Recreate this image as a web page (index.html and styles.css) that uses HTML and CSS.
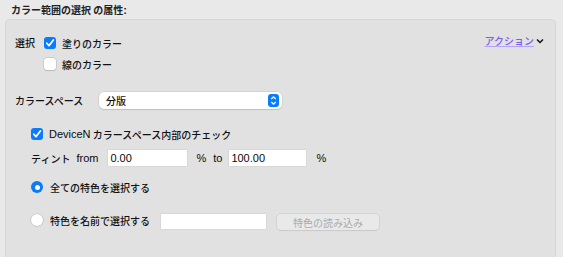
FILE: index.html
```html
<!DOCTYPE html>
<html lang="ja">
<head>
    <meta charset="UTF-8">
    <title>カラー範囲の選択</title>
    <link rel="stylesheet" href="styles.css">
</head>
<body>
    <div class="title">カラー範囲の選択 の属性<span class="lat">:</span></div>

    <div class="group">
        <!-- 選択 -->
        <div class="row-select">
            <span class="label-select">選択</span>
            <div class="checks">
                <label class="item">
                    <span class="check on">
                        <svg width="12" height="12" viewBox="0 0 12 12"><path d="M2.8 6.2 L5 8.6 L9.4 3" fill="none" stroke="#fff" stroke-width="1.7" stroke-linecap="round" stroke-linejoin="round"/></svg>
                    </span>
                    塗りのカラー
                </label>
                <label class="item">
                    <span class="check"></span>
                    線のカラー
                </label>
            </div>
            <a class="action" href="#">アクション</a>
            <svg class="chev" width="8" height="6" viewBox="0 0 8 6"><path d="M1 1.5 L4 4.5 L7 1.5" fill="none" stroke="#111" stroke-width="1.5"/></svg>
        </div>

        <!-- カラースペース -->
        <div class="row-space">
            <span class="label-space">カラースペース</span>
            <div class="select">
                <span>分版</span>
                <span class="stepper">
                    <svg width="7" height="11" viewBox="0 0 7 11"><path d="M1.3 4 L3.5 1.8 L5.7 4 M1.3 7 L3.5 9.2 L5.7 7" fill="none" stroke="#fff" stroke-width="1.3"/></svg>
                </span>
            </div>
        </div>

        <div class="indent">
            <label class="item row-device">
                <span class="check on">
                    <svg width="12" height="12" viewBox="0 0 12 12"><path d="M2.8 6.2 L5 8.6 L9.4 3" fill="none" stroke="#fff" stroke-width="1.7" stroke-linecap="round" stroke-linejoin="round"/></svg>
                </span>
                <span class="lat">DeviceN</span>&nbsp;カラースペース内部のチェック
            </label>

            <div class="row-tint">
                <span>ティント</span>
                <span class="lat from">from</span>
                <input class="field f-from" type="text" value="0.00">
                <span class="lat pct">%</span>
                <span class="lat to">to</span>
                <input class="field f-to" type="text" value="100.00">
                <span class="lat pct2">%</span>
            </div>

            <label class="item row-radio1">
                <span class="radio on"><span class="dot"></span></span>
                全ての特色を選択する
            </label>

            <div class="row-radio2">
                <label class="item radio2-label">
                    <span class="radio"></span>
                    特色を名前で選択する
                </label>
                <input class="field f-name" type="text" value="">
                <button class="btn" disabled>特色の読み込み</button>
            </div>
        </div>
    </div>
</body>
</html>
```

FILE: styles.css
```css
body {
    margin: 0;
    background: #e9e9e9;
    font-family: "Noto Sans CJK JP", sans-serif;
    font-size: 10px;
    font-weight: 500;
    color: #111;
    height: 257px;
    overflow: hidden;
}

.lat {
    font-family: "Liberation Sans", "Noto Sans CJK JP", sans-serif;
    font-size: 11px;
    font-weight: normal;
    color: #0a0a0a;
}

.title {
    padding: 3px 0 0 11px;
    height: 16px;
    line-height: 14px;
    font-weight: bold;
    color: #222;
}

.title .lat {
    font-weight: bold;
    color: #222;
}

/* グループボックス */
.group {
    margin: 0 7px 0 5px;
    height: 238px;
    background: #e1e1e1;
    border: 1px solid #d6d6d6;
    border-bottom: none;
    border-radius: 5px 5px 0 0;
    padding: 16px 0 0 9px;
    box-sizing: border-box;
}

.item {
    display: flex;
    align-items: center;
    height: 14px;
}

.check {
    width: 12px;
    height: 12px;
    border-radius: 3px;
    background: #fff;
    box-shadow: 0 0 0 0.5px #b9b9b9, 0 0.5px 1px rgba(0, 0, 0, 0.15);
    margin-right: 6px;
    display: flex;
}

.check.on {
    background: #0b7bfe;
    box-shadow: none;
}

.row-select {
    display: flex;
    align-items: flex-start;
    height: 55px;
}

.label-select {
    width: 29px;
    line-height: 14px;
}

.checks {
    display: flex;
    flex-direction: column;
    gap: 7px;
}

.action {
    margin-left: auto;
    margin-top: -2px;
    color: #7b5cf2;
    text-decoration-color: #b3a2f5;
    line-height: 14px;
}

.chev {
    margin: 2px 11px 0 2px;
}

.row-space {
    display: flex;
    align-items: center;
    height: 18px;
}

.label-space {
    width: 84px;
}

.select {
    width: 183px;
    height: 17px;
    background: #fff;
    border-radius: 5px;
    box-shadow: 0 0 0 0.5px #c4c4c4, 0 1px 1px rgba(0, 0, 0, 0.15);
    display: flex;
    align-items: center;
    justify-content: space-between;
    padding: 0 3px 0 7px;
    box-sizing: border-box;
}

.stepper {
    width: 11px;
    height: 13px;
    border-radius: 3px;
    background: #0b7bfe;
    display: flex;
    align-items: center;
    justify-content: center;
}

.indent {
    padding-left: 16px;
}

.row-device {
    margin-top: 18px;
}

.row-tint {
    display: flex;
    align-items: center;
    height: 18px;
    margin-top: 8px;
}

.from {
    margin-left: 6px;
}

.field {
    height: 16px;
    border: none;
    background: #fff;
    box-shadow: 0 0 0 0.5px #cfcfcf;
    font-family: "Liberation Sans", sans-serif;
    font-size: 11px;
    color: #0a0a0a;
    padding: 0 2px;
    box-sizing: border-box;
    outline: none;
}

.f-from {
    width: 79px;
    margin-left: 10px;
}

.pct {
    margin-left: 9px;
}

.to {
    margin-left: 7px;
}

.f-to {
    width: 77px;
    margin-left: 7px;
}

.pct2 {
    margin-left: 10px;
}

.radio {
    width: 12px;
    height: 12px;
    border-radius: 50%;
    background: #fff;
    box-shadow: 0 0 0 0.5px #b9b9b9, 0 0.5px 1px rgba(0, 0, 0, 0.15);
    margin-right: 7px;
    display: flex;
    align-items: center;
    justify-content: center;
}

.radio.on {
    background: #0b7bfe;
    box-shadow: none;
}

.dot {
    width: 5px;
    height: 5px;
    border-radius: 50%;
    background: #fff;
}

.row-radio1 {
    margin-top: 13px;
}

.row-radio2 {
    display: flex;
    align-items: flex-start;
    height: 16px;
    margin-top: 20px;
}

.radio2-label {
    margin-top: -1px;
}

.f-name {
    width: 105px;
    height: 15px;
    margin-left: 11px;
}

.btn {
    width: 102px;
    height: 16px;
    margin-left: 11px;
    border: none;
    border-radius: 4px;
    background: #e9e9e9;
    box-shadow: 0 0 0 0.5px #cacaca, 0 0.5px 1px rgba(0, 0, 0, 0.1);
    font-family: "Noto Sans CJK JP", sans-serif;
    font-size: 10px;
    font-weight: normal;
    color: #a9a9a9;
    padding: 0;
}
```
